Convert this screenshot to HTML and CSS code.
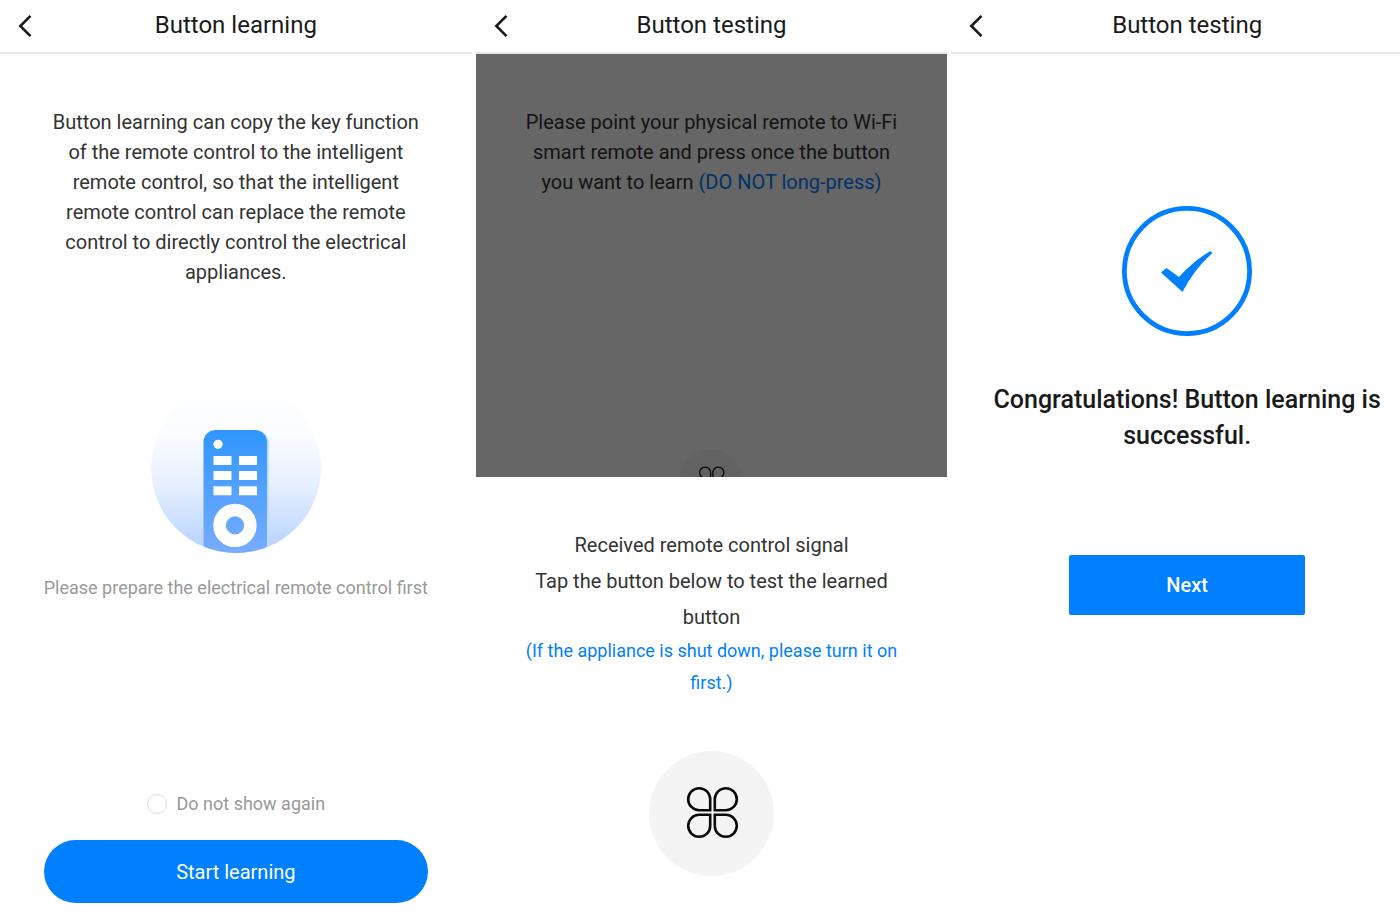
FILE: index.html
```html
<!DOCTYPE html>
<html lang="en">
<head>
    <meta charset="UTF-8">
    <meta name="viewport" content="width=device-width, initial-scale=1.0">
    <title>Button learning</title>
    <link rel="stylesheet" href="styles.css">
</head>
<body>

<!-- shared icons -->
<svg class="sprite" aria-hidden="true">
    <symbol id="icon-back" viewBox="0 0 14 24">
        <path d="M12.5 1.8 L2.3 12 L12.5 22.2" fill="none" stroke="#1a1a1a" stroke-width="2.6"/>
    </symbol>
    <symbol id="icon-clover" viewBox="0 0 56 56">
        <g fill="none" stroke="#0a0a0a" stroke-width="2.6" transform="translate(3.5 0.5)">
            <path d="M23.7 23.7 H12.6 A11 11 0 1 1 23.7 12.6 Z"/>
            <path d="M28.3 23.7 V12.6 A11 11 0 1 1 39.4 23.7 Z"/>
            <path d="M23.7 28.3 V39.4 A11 11 0 1 1 12.6 28.3 Z"/>
            <path d="M28.3 28.3 H39.4 A11 11 0 1 1 28.3 39.4 Z"/>
        </g>
    </symbol>
</svg>

<main class="screens">

    <!-- Step 1: intro -->
    <section class="screen">
        <header class="navbar">
            <button class="back" type="button" aria-label="Back"><svg><use href="#icon-back"/></svg></button>
            <h1>Button learning</h1>
        </header>
        <p class="intro">Button learning can copy the key function of the remote control to the intelligent remote control, so that the intelligent remote control can replace the remote control to directly control the electrical appliances.</p>
        <svg class="remote" viewBox="0 0 170 170" aria-hidden="true">
            <defs>
                <linearGradient id="sky" x1="0" y1="0" x2="0" y2="1">
                    <stop offset="0" stop-color="#ffffff"/>
                    <stop offset="0.3" stop-color="#fafcff"/>
                    <stop offset="0.6" stop-color="#e6f0ff"/>
                    <stop offset="1" stop-color="#b4d0ff"/>
                </linearGradient>
                <linearGradient id="shell" x1="0" y1="0" x2="0" y2="1">
                    <stop offset="0" stop-color="#3096ff"/>
                    <stop offset="1" stop-color="#78adff"/>
                </linearGradient>
                <clipPath id="disc"><circle cx="85" cy="85" r="85"/></clipPath>
            </defs>
            <g clip-path="url(#disc)">
                <rect width="170" height="170" fill="url(#sky)"/>
                <rect x="56" y="48" width="62" height="140" rx="12" fill="#c3dcff"/>
                <rect x="52.5" y="47" width="63.5" height="126" rx="12" fill="url(#shell)"/>
                <circle cx="67" cy="61.3" r="4.6" fill="#fff"/>
                <g fill="#fff">
                    <rect x="62.5" y="73" width="18" height="9"/>
                    <rect x="88" y="73" width="18" height="9"/>
                    <rect x="62.5" y="88" width="18" height="9"/>
                    <rect x="88" y="88" width="18" height="9"/>
                    <rect x="62.5" y="103.3" width="18" height="9"/>
                    <rect x="88" y="103.3" width="18" height="9"/>
                </g>
                <circle cx="84" cy="142.4" r="15.4" fill="none" stroke="#fff" stroke-width="12.6"/>
            </g>
        </svg>
        <p class="caption">Please prepare the electrical remote control first</p>
        <footer class="actions">
            <label class="skip"><input type="checkbox">Do not show again</label>
            <button class="start" type="button">Start learning</button>
        </footer>
    </section>

    <!-- Step 2: test the learned button -->
    <section class="screen">
        <header class="navbar">
            <button class="back" type="button" aria-label="Back"><svg><use href="#icon-back"/></svg></button>
            <h1>Button testing</h1>
        </header>
        <div class="dimmed">
            <p class="intro">Please point your physical remote to Wi-Fi smart remote and press once the button you want to learn <span class="blue">(DO NOT long-press)</span></p>
            <div class="key key-small"><svg><use href="#icon-clover"/></svg></div>
        </div>
        <div class="sheet">
            <p class="message">Received remote control signal<br>Tap the button below to test the learned button</p>
            <p class="hint blue">(If the appliance is shut down, please turn it on first.)</p>
            <button class="key" type="button" aria-label="Test"><svg><use href="#icon-clover"/></svg></button>
        </div>
    </section>

    <!-- Step 3: done -->
    <section class="screen">
        <header class="navbar">
            <button class="back" type="button" aria-label="Back"><svg><use href="#icon-back"/></svg></button>
            <h1>Button testing</h1>
        </header>
        <svg class="success" viewBox="0 0 130 130" aria-hidden="true">
            <circle cx="65" cy="65" r="62.6" fill="none" stroke="#007fff" stroke-width="4.8"/>
            <path d="M39 66.5 L44.5 62 L57 71 Q72 54.5 88.5 45 L90.5 47 Q73 62 60.5 86 Z" fill="#007fff"/>
        </svg>
        <h2 class="congrats">Congratulations! Button learning is successful.</h2>
        <button class="next" type="button">Next</button>
    </section>

</main>

</body>
</html>
```
FILE: styles.css
```css
* {
    box-sizing: border-box;
}
body {
    margin: 0;
    background-color: #fff;
    color: #333;
    font-family: Roboto, "Liberation Sans", sans-serif;
    font-size: 20px;
    overflow-x: hidden;
}
h1, h2, p {
    margin: 0;
}
button {
    font-family: inherit;
    border: none;
    padding: 0;
    cursor: pointer;
}
.sprite {
    display: none;
}
.blue {
    color: #007fff;
}

/* the last screen runs a little past the window edge */
.screens {
    display: grid;
    grid-template-columns: repeat(3, 1fr);
    gap: 4px;
    margin-right: -23px;
    min-height: 100vh;
}
.screen {
    display: flex;
    flex-direction: column;
    align-items: center;
    text-align: center;
}

/* title bar */
.navbar {
    align-self: stretch;
    display: grid;
    grid-template-columns: 50px 1fr 50px;
    align-items: center;
    height: 54px;
    border-bottom: 2px solid #e8e8e8;
}
.navbar h1 {
    color: #1a1a1a;
    font-size: 24px;
    font-weight: 400;
    line-height: 48px;
    padding-bottom: 3px;
}
.back {
    height: 52px;
    background: none;
}
.back svg {
    display: block;
    width: 14px;
    height: 24px;
    margin: 0 auto;
}

.intro {
    padding: 53px 48px 0;
    line-height: 30px;
}
.remote {
    width: 170px;
    height: 170px;
    margin-top: 96px;
}
.caption {
    margin-top: 20px;
    color: #999;
    font-size: 18px;
    line-height: 30px;
}
.actions {
    align-self: stretch;
    display: flex;
    flex-direction: column;
    align-items: center;
    gap: 21px;
    margin-top: auto;
    padding: 0 44px 13px;
}
.skip {
    display: flex;
    align-items: center;
    gap: 10px;
    color: #999;
    font-size: 18px;
    line-height: 30px;
}
.skip input {
    appearance: none;
    width: 20px;
    height: 20px;
    margin: 0;
    border: 1px solid #ddd;
    border-radius: 50%;
}
.start {
    width: 100%;
    height: 63px;
    border-radius: 32px;
    background-color: #007fff;
    color: #fff;
    font-size: 20px;
}

/* content behind the sheet */
.dimmed {
    position: relative;
    align-self: stretch;
    flex: 1 1 0;
    min-height: 0;
    overflow: hidden;
}
.dimmed::after {
    content: "";
    position: absolute;
    inset: 0;
    background-color: rgba(0, 0, 0, 0.6);
}
.key {
    display: flex;
    align-items: center;
    justify-content: center;
    width: 125px;
    height: 125px;
    border-radius: 50%;
    background-color: #f4f4f4;
}
.key svg {
    width: 56px;
    height: 56px;
}
.key-small {
    width: 62px;
    height: 62px;
    margin: 252px auto 0;
}
.key-small svg {
    width: 28px;
    height: 28px;
}
.sheet {
    align-self: stretch;
    display: flex;
    flex-direction: column;
    align-items: center;
    padding: 50px 48px 40px;
}
.message {
    line-height: 36px;
}
.hint {
    margin-bottom: 52px;
    font-size: 18px;
    line-height: 32px;
}

.success {
    width: 130px;
    height: 130px;
    margin-top: 152px;
}
.congrats {
    margin-top: 46px;
    padding: 0 36px;
    color: #1a1a1a;
    font-size: 25px;
    font-weight: 500;
    line-height: 36px;
}
.next {
    width: 50%;
    height: 60px;
    margin-top: 101px;
    border-radius: 2px;
    background-color: #007fff;
    color: #fff;
    font-size: 20px;
    font-weight: 500;
}
```
